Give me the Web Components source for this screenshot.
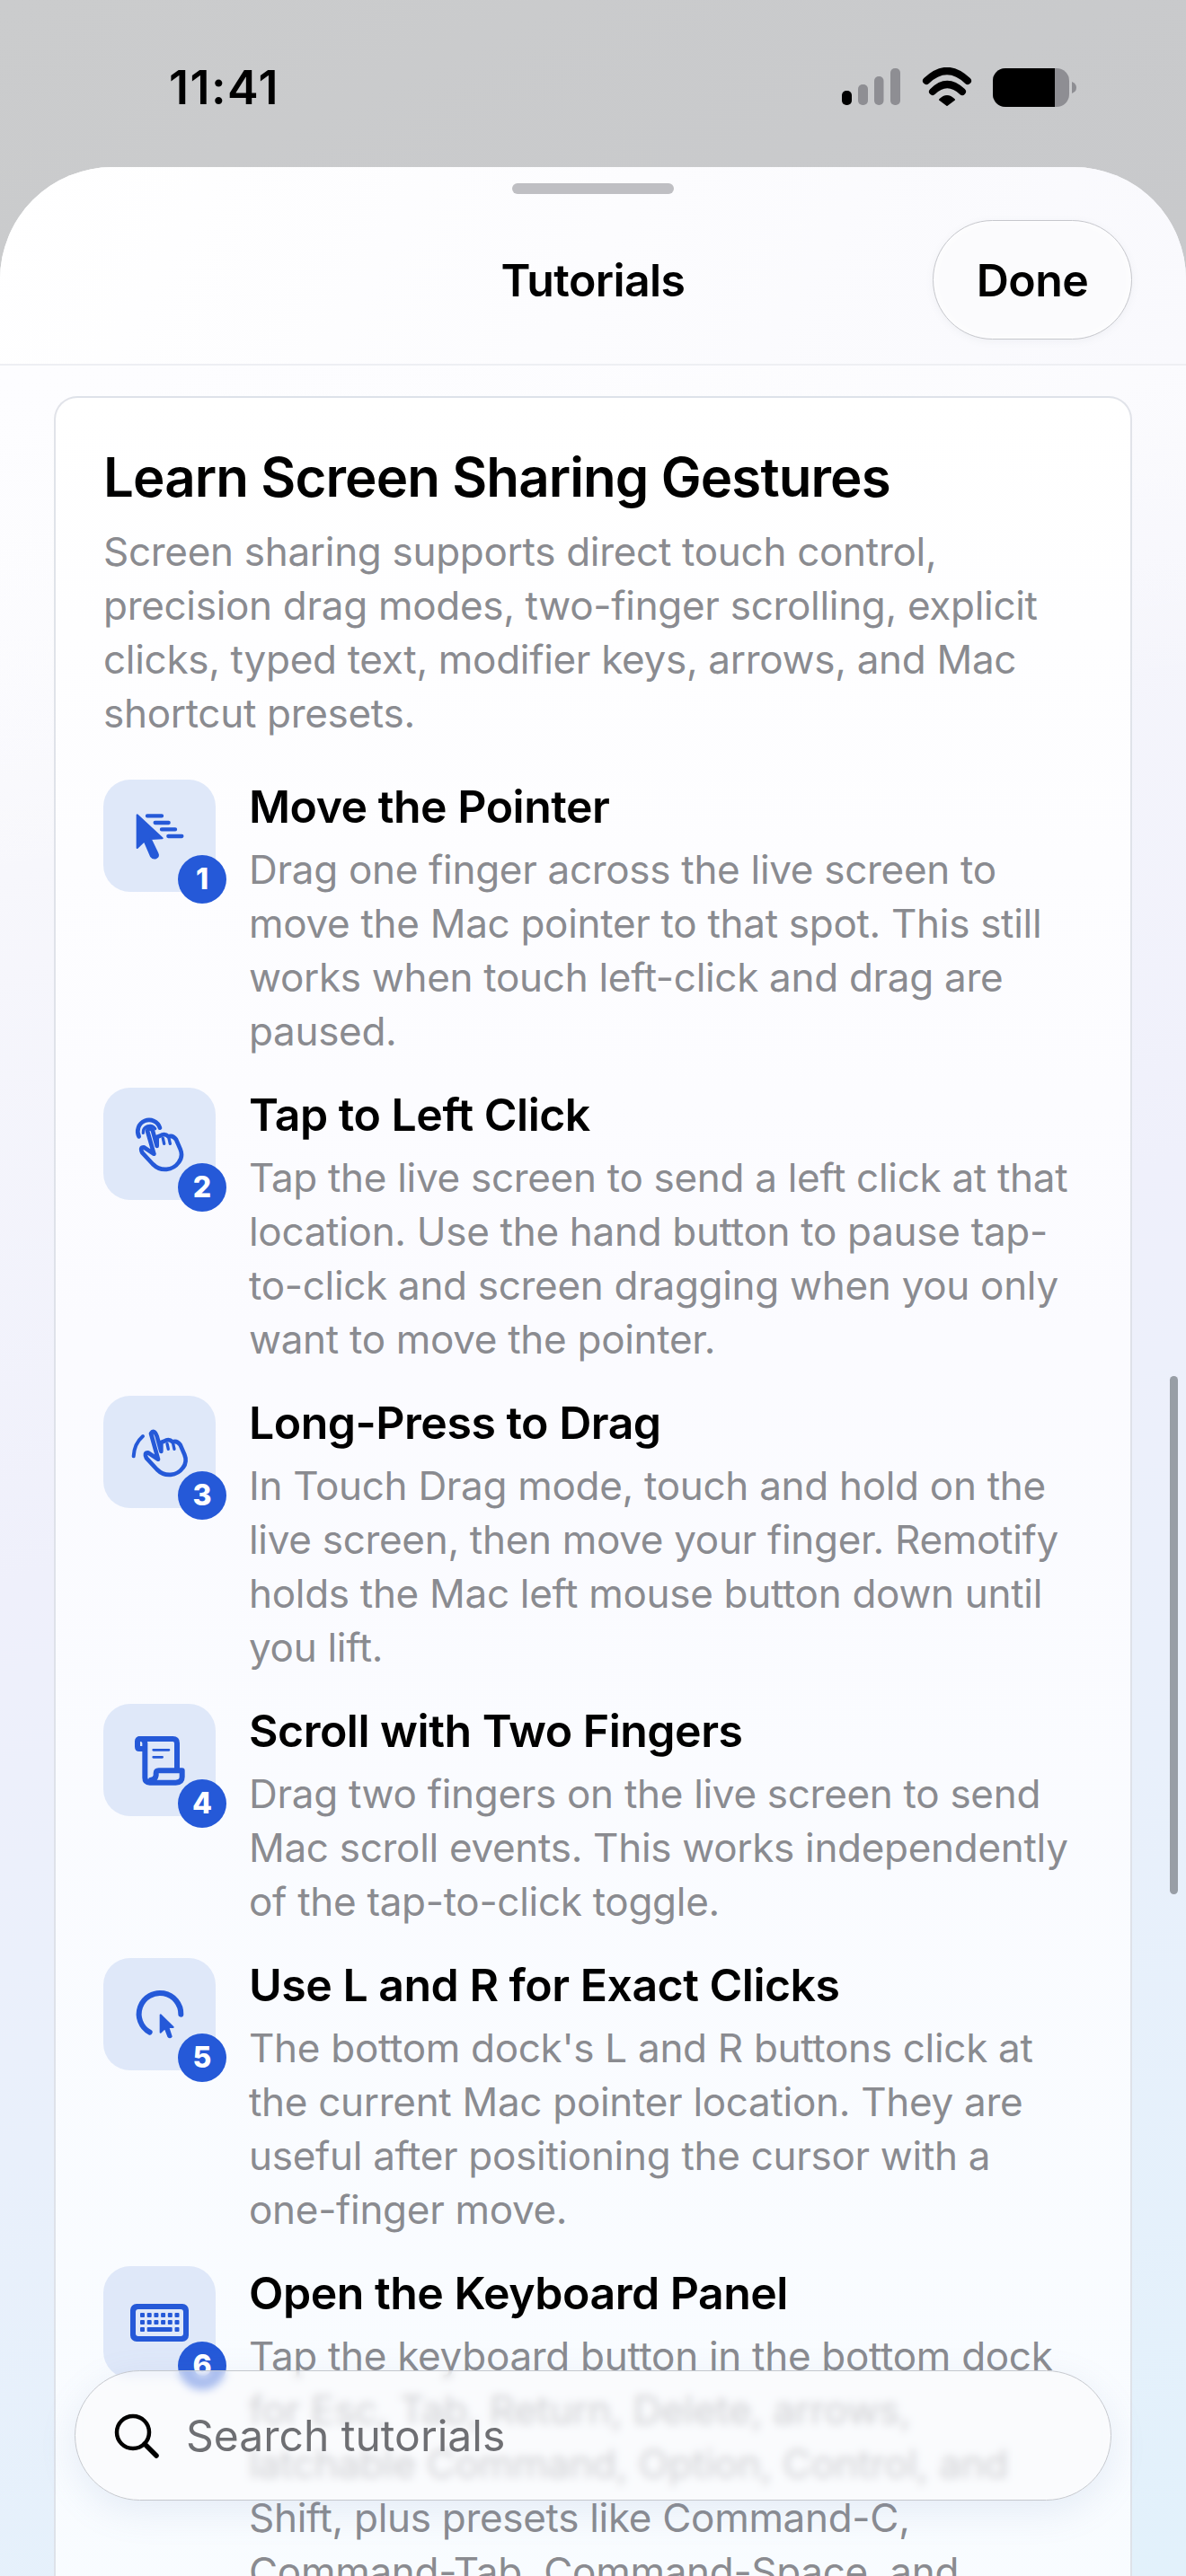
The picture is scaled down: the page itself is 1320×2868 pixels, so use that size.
<!DOCTYPE html>
<html lang="en">
<head>
<meta charset="utf-8">
<title>Tutorials</title>
<style>
  html, body { margin: 0; padding: 0; }
  body { width: 1320px; height: 2868px; overflow: hidden; font-family: Inter, "Liberation Sans", sans-serif; }
</style>
</head>
<body>
<tutorials-screen>
  <tutorial-step n="1" heading="Move the Pointer">
    <svg slot="icon" viewBox="73 84 375 375">
      <path fill="#2559d8" stroke="#2559d8" stroke-width="6" stroke-linejoin="round" d="M186 202V312L210 289L232 340Q240 350 250 345Q259 340 254 330L231 282L270 280Z"/>
      <g stroke="#2559d8" stroke-width="13" stroke-linecap="round" fill="none">
        <path d="M220 205H268M246 228H291M268 250H313M290 273H335"/>
      </g>
    </svg>
    Drag one finger across the live screen to<br>move the Mac pointer to that spot. This still<br>works when touch left-click and drag are<br>paused.
  </tutorial-step>
  <tutorial-step n="2" heading="Tap to Left Click">
    <svg slot="icon" viewBox="73 63 375 375">
      <g fill="none" stroke="#2559d8" stroke-width="14" stroke-linecap="round" stroke-linejoin="round">
        <path d="M242 284L208 262Q194 262 203 280L238 318C265 345 305 340 325 312C338 295 335 280 330 268L316 236Q305 220 290 226Q278 214 262 224L252 228L252 258L238 207Q228 192 220 207L242 284"/>
        <path stroke-width="10" d="M272 232L276 250M292 232L296 250"/>
        <path d="M192 226A38 38 0 1 1 262 197"/>
        <path stroke-width="10" d="M206 214A22 22 0 0 1 246 200"/>
      </g>
    </svg>
    Tap the live screen to send a left click at that<br>location. Use the hand button to pause tap-<br>to-click and screen dragging when you only<br>want to move the pointer.
  </tutorial-step>
  <tutorial-step n="3" heading="Long-Press to Drag">
    <svg slot="icon" viewBox="73 72 375 375">
      <g fill="none" stroke="#2559d8" stroke-width="14" stroke-linecap="round" stroke-linejoin="round">
        <path transform="translate(14 0)" d="M242 284L208 262Q194 262 203 280L238 318C265 345 305 340 325 312C338 295 335 280 330 268L316 236Q305 220 290 226Q278 214 262 224L252 228L252 258L238 207Q228 182 218 198L242 284"/>
        <path transform="translate(14 0)" stroke-width="10" d="M272 232L276 250M292 232L296 250"/>
        <path stroke-width="12" d="M174 274Q176 232 205 207"/>
      </g>
    </svg>
    In Touch Drag mode, touch and hold on the<br>live screen, then move your finger. Remotify<br>holds the Mac left mouse button down until<br>you lift.
  </tutorial-step>
  <tutorial-step n="4" heading="Scroll with Two Fingers">
    <svg slot="icon" viewBox="73 81 375 375">
      <g fill="none" stroke="#2559d8" stroke-width="18" stroke-linecap="round" stroke-linejoin="round">
        <path d="M195 198H305Q319 198 319 212V298"/>
        <path d="M212 231H193Q187 231 187 224V206Q187 198 197 198Q212 198 212 212V328Q212 344 228 344H315Q336 344 336 325V304H258Q249 304 249 313V320Q247 335 232 335"/>
        <path stroke-width="8" d="M240 235H292M240 259H270"/>
      </g>
    </svg>
    Drag two fingers on the live screen to send<br>Mac scroll events. This works independently<br>of the tap-to-click toggle.
  </tutorial-step>
  <tutorial-step n="5" heading="Use L and R for Exact Clicks">
    <svg slot="icon" viewBox="73 60 375 375">
      <path fill="none" stroke="#2559d8" stroke-width="18" stroke-linecap="round" d="M228 308A70 70 0 1 1 332 248"/>
      <path fill="#2559d8" stroke="#2559d8" stroke-width="6" stroke-linejoin="round" d="M264 250V308L279 294L290 322Q295 328 300 322L290 291H306Z"/>
    </svg>
    The bottom dock's L and R buttons click at<br>the current Mac pointer location. They are<br>useful after positioning the cursor with a<br>one-finger move.
  </tutorial-step>
  <tutorial-step n="6" heading="Open the Keyboard Panel">
    <svg slot="icon" viewBox="0 0 125 125">
      <rect x="30" y="42" width="65" height="42" rx="7" fill="#2559d8"/>
      <rect x="36" y="48" width="53" height="30" rx="3" fill="#dfe8f9"/>
      <g fill="#2559d8">
        <rect x="41" y="52" width="5" height="5" rx="1"/><rect x="48.7" y="52" width="5" height="5" rx="1"/><rect x="56.4" y="52" width="5" height="5" rx="1"/><rect x="64.1" y="52" width="5" height="5" rx="1"/><rect x="71.8" y="52" width="5" height="5" rx="1"/><rect x="79.5" y="52" width="5" height="5" rx="1"/>
        <rect x="41" y="60" width="5" height="5" rx="1"/><rect x="48.7" y="60" width="5" height="5" rx="1"/><rect x="56.4" y="60" width="5" height="5" rx="1"/><rect x="64.1" y="60" width="5" height="5" rx="1"/><rect x="71.8" y="60" width="5" height="5" rx="1"/><rect x="79.5" y="60" width="5" height="5" rx="1"/>
        <rect x="41" y="68" width="5" height="5" rx="1"/><rect x="48.7" y="68" width="28" height="5" rx="1"/><rect x="79.5" y="68" width="5" height="5" rx="1"/>
      </g>
    </svg>
    Tap the keyboard button in the bottom dock<br>for Esc, Tab, Return, Delete, arrows,<br>latchable Command, Option, Control, and<br>Shift, plus presets like Command-C,<br>Command-Tab, Command-Space, and
  </tutorial-step>
</tutorials-screen>

<script>
class StatusBar extends HTMLElement {
  connectedCallback() {
    this.attachShadow({ mode: 'open' });
    this.shadowRoot.innerHTML = `
      <style>
        :host {
          display: flex;
          justify-content: space-between;
          align-items: flex-start;
          height: 186px;
          padding: 0 122px 0 188px;
          box-sizing: border-box;
        }
        .time {
          margin-top: 66px;
          font-size: 52px;
          line-height: 64px;
          font-weight: 600;
          color: #000;
          letter-spacing: 1.5px;
        }
        svg { margin-top: 75px; display: block; }
      </style>
      <div class="time">11:41</div>
      <svg width="261" height="44" viewBox="0 0 261 44">
        <rect x="0" y="26" width="11" height="16" rx="5" fill="#000"/>
        <rect x="18" y="19" width="11" height="23" rx="5" fill="#8e8e93"/>
        <rect x="36" y="10" width="10.500" height="32" rx="5" fill="#8e8e93"/>
        <rect x="54" y="1" width="11" height="41" rx="5" fill="#8e8e93"/>
        <g fill="none" stroke="#000" stroke-width="8" stroke-linecap="round">
          <path d="M94 15Q117 -7 140 15"/>
          <path d="M101 27Q117 11 134 27"/>
        </g>
        <path d="M117 42L109 36Q117 28 125 36Z" fill="#000" stroke="#000" stroke-width="2" stroke-linejoin="round"/>
        <rect x="168" y="1" width="85" height="43" rx="14" fill="#8e8e93"/>
        <path d="M182 1H237V44H182A14 14 0 0 1 168 30V15A14 14 0 0 1 182 1Z" fill="#000"/>
        <path d="M256 16Q261 18 261 22.500Q261 27 256 29Z" fill="#8e8e93"/>
      </svg>
    `;
  }
}
customElements.define('status-bar', StatusBar);

class SheetHeader extends HTMLElement {
  connectedCallback() {
    this.attachShadow({ mode: 'open' });
    this.shadowRoot.innerHTML = `
      <style>
        :host {
          display: flex;
          flex-direction: column;
          align-items: center;
          height: 221px;
          box-sizing: border-box;
          padding-top: 18px;
          border-bottom: 2px solid #eeeff3;
        }
        .handle { width: 180px; height: 12px; border-radius: 6px; background: #bfbfc3; }
        .row {
          width: 100%;
          box-sizing: border-box;
          margin-top: 29px;
          padding: 0 60px;
          display: grid;
          grid-template-columns: 1fr auto 1fr;
          align-items: center;
        }
        .title { font-size: 50px; font-weight: 600; color: #000; letter-spacing: -0.6px; }
        .done {
          justify-self: end;
          width: 222px;
          height: 133px;
          box-sizing: border-box;
          border-radius: 67px;
          border: 1.5px solid #c6c7cc;
          background: #fbfbfd;
          box-shadow: inset 0 0 14px rgba(255,255,255,.9), 0 2px 8px rgba(120,125,140,.08);
          display: flex;
          align-items: center;
          justify-content: center;
          font-size: 50px;
          font-weight: 600;
          letter-spacing: -0.6px;
          color: #000;
        }
      </style>
      <div class="handle"></div>
      <div class="row">
        <span></span>
        <div class="title">Tutorials</div>
        <div class="done">Done</div>
      </div>
    `;
  }
}
customElements.define('sheet-header', SheetHeader);

class TutorialStep extends HTMLElement {
  connectedCallback() {
    const n = this.getAttribute('n');
    const heading = this.getAttribute('heading');
    this.attachShadow({ mode: 'open' });
    this.shadowRoot.innerHTML = `
      <style>
        :host {
          display: grid;
          grid-template-columns: 125px 1fr;
          column-gap: 37px;
        }
        .tile {
          position: relative;
          width: 125px;
          height: 125px;
          border-radius: 30px;
          background: #dfe8f9;
        }
        ::slotted(svg) { display: block; width: 125px; height: 125px; }
        .badge {
          position: absolute;
          right: -12px;
          bottom: -13px;
          width: 54px;
          height: 54px;
          border-radius: 50%;
          background: #2559d8;
          color: #fff;
          font-size: 32px;
          font-weight: 800;
          line-height: 54px;
          text-align: center;
        }
        h3 {
          margin: 0 0 10px;
          font-size: 50px;
          line-height: 60px;
          font-weight: 600;
          letter-spacing: -0.5px;
          color: #000;
        }
        .body {
          font-size: 44px;
          line-height: 60px;
          color: #8a8b90;
          letter-spacing: -0.3px;
          white-space: nowrap;
        }
      </style>
      <div class="tile"><slot name="icon"></slot><div class="badge">${n}</div></div>
      <div>
        <h3>${heading}</h3>
        <div class="body"><slot></slot></div>
      </div>
    `;
  }
}
customElements.define('tutorial-step', TutorialStep);

class SearchPill extends HTMLElement {
  connectedCallback() {
    this.attachShadow({ mode: 'open' });
    this.shadowRoot.innerHTML = `
      <style>
        :host {
          position: absolute;
          left: 83px;
          top: 2639px;
          width: 1154px;
          height: 145px;
          box-sizing: border-box;
          border-radius: 73px;
          border: 1.5px solid #c4c7cd;
          background: rgba(250,250,252,.62);
          -webkit-backdrop-filter: blur(5px);
          backdrop-filter: blur(5px);
          box-shadow: 0 12px 40px rgba(110,140,190,.14);
          display: flex;
          align-items: center;
          gap: 30px;
          padding-left: 43px;
        }
        svg { display: block; flex: none; }
        span { font-size: 48px; color: #6e6f73; }
      </style>
      <svg width="50" height="50" viewBox="0 0 50 50" fill="none" stroke="#000" stroke-width="4.500" stroke-linecap="round">
        <circle cx="21" cy="21" r="18"/>
        <path d="M34 34L47 47" stroke-width="5.500"/>
      </svg>
      <span>Search tutorials</span>
    `;
  }
}
customElements.define('search-pill', SearchPill);

class TutorialsScreen extends HTMLElement {
  connectedCallback() {
    this.attachShadow({ mode: 'open' });
    this.shadowRoot.innerHTML = `
      <style>
        :host {
          display: flex;
          flex-direction: column;
          position: relative;
          width: 1320px;
          height: 2868px;
          overflow: hidden;
          background: linear-gradient(155deg, #cbcccd 0%, #bfc0c6 100%);
        }
        .sheet {
          flex: 1;
          min-height: 0;
          display: flex;
          flex-direction: column;
          border-radius: 125px 125px 0 0;
          overflow: hidden;
          background: linear-gradient(160deg, #ffffff 0%, #f7f7fc 25%, #eff0fb 50%, #e9f0fb 70%, #e2f1fb 100%);
        }
        sheet-header { flex: none; background: linear-gradient(120deg, #ffffff 0%, #f9f9fd 100%); }
        .scroll {
          flex: 1;
          min-height: 0;
          overflow: hidden;
          padding: 34px 60px 0;
          background: linear-gradient(170deg, #fdfdff 0%, rgba(250,250,255,0) 22%);
        }
        .card {
          box-sizing: border-box;
          border: 2px solid rgba(200,205,216,.55);
          border-bottom: 0;
          border-radius: 26px 26px 0 0;
          background: linear-gradient(180deg, #ffffff 0%, #fbfbff 40%, #f8fcff 100%);
          padding: 53px 53px 0;
          height: 2600px;
        }
        h1 {
          margin: 0 0 18px;
          font-size: 60px;
          line-height: 70px;
          font-weight: 600;
          letter-spacing: -0.9px;
          color: #000;
        }
        .intro {
          margin: 0 0 44px;
          font-size: 44px;
          line-height: 60px;
          color: #8a8b90;
          letter-spacing: -0.3px;
        }
        .steps { display: flex; flex-direction: column; gap: 33px; }
        .thumb {
          position: absolute;
          left: 1302px;
          top: 1532px;
          width: 9px;
          height: 577px;
          border-radius: 5px;
          background: #989ea6;
        }
      </style>
      <status-bar></status-bar>
      <div class="sheet">
        <sheet-header></sheet-header>
        <div class="scroll">
          <div class="card">
            <h1>Learn Screen Sharing Gestures</h1>
            <p class="intro">Screen sharing supports direct touch control,<br>precision drag modes, two-finger scrolling, explicit<br>clicks, typed text, modifier keys, arrows, and Mac<br>shortcut presets.</p>
            <div class="steps"><slot></slot></div>
          </div>
        </div>
      </div>
      <div class="thumb"></div>
      <search-pill></search-pill>
    `;
  }
}
customElements.define('tutorials-screen', TutorialsScreen);
</script>
</body>
</html>
